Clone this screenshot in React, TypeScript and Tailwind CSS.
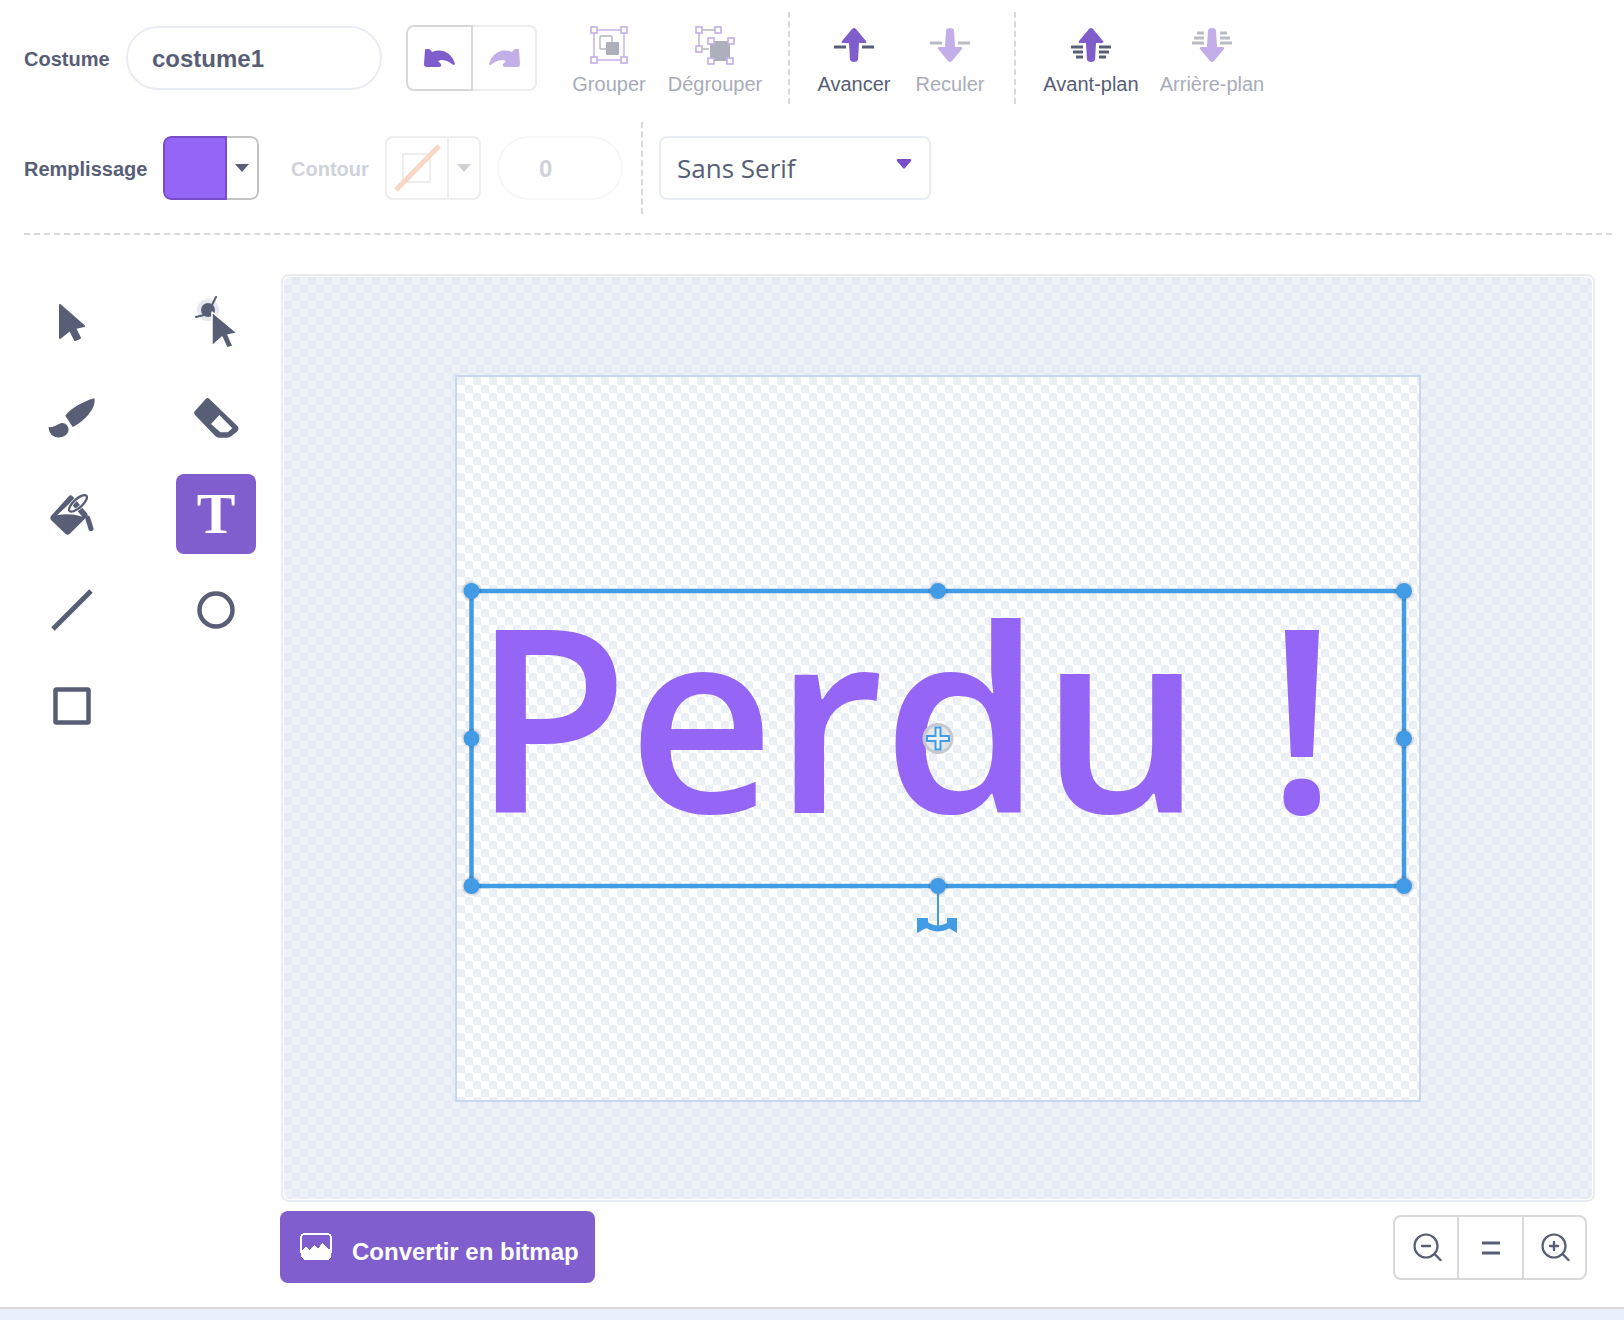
const ink = "#575e75";
const purple = "#7f5ecb";
const lilac = "#c3aee8";
const greyLine = "#b9bbc5";

function SelectIcon() {
  return (
    <svg width="28" height="39" viewBox="0 0 28 39">
      <path
        d="M2 2 L26 23 L17 25 L22 35 L17 37 L12 27 L2 35 Z"
        fill={ink}
        stroke={ink}
        strokeWidth="2"
        strokeLinejoin="round"
      />
    </svg>
  );
}

function ReshapeIcon() {
  return (
    <svg width="43" height="53" viewBox="0 0 43 53">
      <circle cx="13" cy="14" r="11" fill="#e6e8ef" />
      <circle cx="13" cy="14" r="7" fill={ink} />
      <path d="M1 21 L9 19 M17 9 L21 1" stroke={ink} strokeWidth="2" strokeLinecap="round" />
      <path
        d="M17 16 L42 37 L33 39 L38 50 L32 52 L27 41 L17 50 Z"
        fill={ink}
        stroke="#ffffff"
        strokeWidth="1.5"
        strokeLinejoin="round"
      />
    </svg>
  );
}

function BrushIcon() {
  return (
    <svg width="48" height="42" viewBox="86 382 144 126">
      <path d="M225 386 C190 395 150 420 138 438 L160 472 C195 455 232 415 225 386 Z" fill={ink} />
      <path
        d="M88 472 C105 475 115 462 128 460 C142 460 152 475 146 488 C138 504 118 505 108 502 C95 498 88 485 88 472 Z"
        fill={ink}
      />
    </svg>
  );
}

function EraserIcon() {
  return (
    <svg width="46" height="42" viewBox="518 384 138 126">
      <path
        d="M565 388 L652 472 Q658 480 650 488 L632 502 Q628 506 620 506 L596 506 Q590 506 584 500 L524 438 Q518 430 526 424 L556 390 Q560 386 565 388 Z"
        fill={ink}
      />
      <path d="M597 438 L636 478 L622 490 L600 490 L572 465 Z" fill="#ffffff" />
    </svg>
  );
}

function BucketIcon() {
  return (
    <svg width="46" height="44" viewBox="86 660 138 132">
      <path
        d="M146 672 Q150 668 156 672 L200 724 Q204 730 198 736 L148 786 Q142 790 136 786 L92 744 Q88 738 92 732 Z"
        fill={ink}
      />
      <path d="M150 692 L186 734 Q150 722 110 730 Z" fill="#ffffff" />
      <ellipse
        cx="173"
        cy="694"
        rx="13"
        ry="34"
        transform="rotate(48 173 694)"
        fill="none"
        stroke="#ffffff"
        strokeWidth="11"
      />
      <ellipse
        cx="173"
        cy="694"
        rx="13"
        ry="34"
        transform="rotate(48 173 694)"
        fill="none"
        stroke={ink}
        strokeWidth="7"
      />
      <path d="M202 738 L212 770" stroke={ink} strokeWidth="15" strokeLinecap="round" />
    </svg>
  );
}

function LineIcon() {
  return (
    <svg width="42" height="42" viewBox="0 0 42 42">
      <path d="M2 40 L40 2" stroke={ink} strokeWidth="5" />
    </svg>
  );
}

function CircleIcon() {
  return (
    <svg width="38" height="38" viewBox="0 0 38 38">
      <circle cx="19" cy="19" r="16.5" fill="none" stroke={ink} strokeWidth="4.5" />
    </svg>
  );
}

function SquareIcon() {
  return (
    <svg width="38" height="38" viewBox="0 0 38 38">
      <rect x="2.5" y="2.5" width="33" height="33" rx="1" fill="none" stroke={ink} strokeWidth="4.5" />
    </svg>
  );
}

function UndoIcon({ flip, color }: { flip?: boolean; color: string }) {
  return (
    <svg width="31" height="18" viewBox="0 0 31 18" className={flip ? "-scale-x-100" : ""}>
      <path
        d="M1 1 Q0 0 3 0 L5 0 Q7 1 8 3 Q18 -1 26 6 Q30 10 31 15 Q30 17 28 15 Q23 11 17 11 L14 12 L17 15 Q18 18 15 18 L3 18 Q0 18 0 15 Z"
        fill={color}
      />
    </svg>
  );
}

function HandleBox({ x, y }: { x: number; y: number }) {
  return <rect x={x - 3} y={y - 3} width="6" height="6" fill="#ffffff" stroke={lilac} strokeWidth="1.6" />;
}

function GroupIcon() {
  return (
    <svg width="40" height="40" viewBox="0 0 40 40">
      <rect x="5" y="5" width="30" height="30" fill="none" stroke={lilac} strokeWidth="1.4" />
      <rect x="11" y="11" width="12" height="13" rx="1" fill="none" stroke="#b4b6c1" strokeWidth="1.4" />
      <rect x="17" y="17" width="13" height="13" rx="1" fill="#adb0bb" />
      <HandleBox x={5} y={5} />
      <HandleBox x={35} y={5} />
      <HandleBox x={5} y={35} />
      <HandleBox x={35} y={35} />
    </svg>
  );
}

function UngroupIcon() {
  return (
    <svg width="42" height="40" viewBox="0 0 42 40">
      <path d="M5 5 L24 5 M5 5 L5 24 M5 24 L15 24" stroke="#b4b6c1" strokeWidth="1.4" />
      <rect x="16" y="16" width="20" height="20" fill="#adb0bb" />
      <HandleBox x={5} y={5} />
      <HandleBox x={24} y={5} />
      <HandleBox x={5} y={24} />
      <HandleBox x={17} y={16} />
      <HandleBox x={37} y={16} />
      <HandleBox x={17} y={36} />
      <HandleBox x={36} y={36} />
    </svg>
  );
}

function ArrowUpIcon({ layers, active }: { layers: number; active: boolean }) {
  const line = active ? ink : greyLine;
  return (
    <svg width="40" height="34" viewBox="0 0 40 34">
      <path
        d="M20 0 Q21 0 22 1 L32 13 Q33 15 31 15 L25 15 L24 32 Q23 34 20 34 Q17 34 16 32 L15 15 L9 15 Q7 15 8 13 L18 1 Q19 0 20 0 Z"
        fill={purple}
      />
      <path d="M0 19 L12 19 M28 19 L40 19" stroke={line} strokeWidth="3" />
      {layers > 1 && <path d="M2 24 L12 24 M28 24 L38 24" stroke={line} strokeWidth="3" />}
      {layers > 1 && <path d="M5 29 L12 29 M28 29 L35 29" stroke={line} strokeWidth="3" />}
    </svg>
  );
}

function ArrowDownIcon({ layers }: { layers: number }) {
  return (
    <svg width="40" height="34" viewBox="0 0 40 34">
      <path
        d="M20 34 Q21 34 22 33 L32 21 Q33 19 31 19 L25 19 L24 2 Q23 0 20 0 Q17 0 16 2 L15 19 L9 19 Q7 19 8 21 L18 33 Q19 34 20 34 Z"
        fill={lilac}
      />
      <path d="M0 15 L12 15 M28 15 L40 15" stroke={greyLine} strokeWidth="3" />
      {layers > 1 && <path d="M2 10 L12 10 M28 10 L38 10" stroke={greyLine} strokeWidth="3" />}
      {layers > 1 && <path d="M5 5 L12 5 M28 5 L35 5" stroke={greyLine} strokeWidth="3" />}
    </svg>
  );
}

function Caret({ color }: { color: string }) {
  return (
    <svg width="14" height="8" viewBox="0 0 14 8">
      <path d="M0 0 L14 0 L7 8 Z" fill={color} />
    </svg>
  );
}

function ZoomIcon({ kind }: { kind: "minus" | "plus" }) {
  return (
    <svg width="29" height="29" viewBox="0 0 29 29">
      <circle cx="13" cy="13" r="11.5" fill="none" stroke={ink} strokeWidth="2.2" />
      <path d="M22 21.5 L27.5 27" stroke={ink} strokeWidth="2.4" strokeLinecap="round" />
      <path d="M9 13 L17 13" stroke={ink} strokeWidth="2.4" strokeLinecap="round" />
      {kind === "plus" && <path d="M13 9 L13 17" stroke={ink} strokeWidth="2.4" strokeLinecap="round" />}
    </svg>
  );
}

function BitmapIcon() {
  return (
    <svg width="32" height="28" viewBox="0 0 32 28" shapeRendering="crispEdges">
      <path d="M1 20 L1 5 Q1 1 5 1 L27 1 Q31 1 31 5 L31 20" fill="none" stroke="#ffffff" strokeWidth="1.6" />
      <path d="M1 18 L6 14 L9 17 L14 12 L18 16 L22 10 L27 15 L31 17 L31 24 L28 27 L4 27 L1 24 Z" fill="#ffffff" />
    </svg>
  );
}

type ToolLabelProps = {
  label: string;
  width: string;
  dim?: boolean;
  children: React.ReactNode;
};

function ToolLabel({ label, width, dim, children }: ToolLabelProps) {
  return (
    <div className={`flex flex-col items-center pt-[4px] ${width}`}>
      <div className="flex h-[40px] items-center">{children}</div>
      <span className={`mt-[7px] text-[20px] leading-[24px] ${dim ? "text-[#a9acba]" : "text-[#575e75]"}`}>
        {label}
      </span>
    </div>
  );
}

function Handle({ cx, cy }: { cx: number; cy: number }) {
  return (
    <g>
      <circle cx={cx} cy={cy} r="10" fill="#000000" fillOpacity="0.1" />
      <circle cx={cx} cy={cy} r="8" fill="#429be5" />
    </g>
  );
}

function SelectionOverlay() {
  const left = 14.5;
  const right = 947;
  const top = 214;
  const bottom = 509;
  const midX = 481;
  const midY = 361.5;
  return (
    <svg className="absolute left-0 top-0 h-full w-full" viewBox="0 0 962 723">
      <rect x={left} y={top} width={right - left} height={bottom - top} fill="none" stroke="#429be5" strokeWidth="4.5" />
      <path d={`M${midX} ${bottom} L${midX} 552`} stroke="#429be5" strokeWidth="2" />
      <path d="M467 546 Q481 557 495 546" fill="none" stroke="#429be5" strokeWidth="6" />
      <path d="M460 541 L471 541 L471 550 L460 556 Z M500 541 L490 541 L490 550 L500 556 Z" fill="#429be5" />
      {[left, midX, right].map((cx) => (
        <Handle key={`t${cx}`} cx={cx} cy={top} />
      ))}
      {[left, right].map((cx) => (
        <Handle key={`m${cx}`} cx={cx} cy={midY} />
      ))}
      {[left, midX, right].map((cx) => (
        <Handle key={`b${cx}`} cx={cx} cy={bottom} />
      ))}
      <circle cx={midX} cy={midY} r="14" fill="#d5d8de" fillOpacity="0.6" stroke="#c6c9cf" strokeWidth="3" />
      <path
        d={`M${midX - 2.5} ${midY - 11} h5 v8.5 h8.5 v5 h-8.5 v8.5 h-5 v-8.5 h-8.5 v-5 h8.5 Z`}
        fill="#eef3fb"
        stroke="#429be5"
        strokeWidth="2"
      />
    </svg>
  );
}

export default function App() {
  return (
    <div className="flex h-[1320px] w-[1624px] flex-col overflow-hidden bg-white font-['Liberation_Sans',Arial,sans-serif] text-[#575e75]">
      <div className="mt-[12px] flex h-[92px] items-center pl-[24px]">
        <span className="w-[102px] pt-[2px] text-[20px] font-bold">Costume</span>
        <div className="flex h-[64px] w-[256px] items-center rounded-[32px] border-2 border-[#e9edf3] pl-[24px] pt-[2px] text-[24px] font-bold">
          costume1
        </div>
        <div className="ml-[24px] flex h-[66px] w-[131px] rounded-lg">
          <div className="flex w-[67px] items-center justify-center rounded-l-lg border-2 border-[#d9d9d9]">
            <UndoIcon color={purple} />
          </div>
          <div className="flex flex-1 items-center justify-center rounded-r-lg border-2 border-l-0 border-[#ececec]">
            <UndoIcon flip color={lilac} />
          </div>
        </div>
        <div className="ml-[21px] flex items-center">
          <ToolLabel label="Grouper" width="w-[102px]" dim>
            <GroupIcon />
          </ToolLabel>
          <ToolLabel label="Dégrouper" width="w-[110px]" dim>
            <UngroupIcon />
          </ToolLabel>
        </div>
        <div className="ml-[18px] h-full border-l-2 border-dashed border-[#d9d9d9]" />
        <div className="ml-[18px] flex items-center">
          <ToolLabel label="Avancer" width="w-[92px]">
            <ArrowUpIcon layers={1} active />
          </ToolLabel>
          <ToolLabel label="Reculer" width="w-[100px]" dim>
            <ArrowDownIcon layers={1} />
          </ToolLabel>
        </div>
        <div className="ml-[14px] h-full border-l-2 border-dashed border-[#d9d9d9]" />
        <div className="ml-[20px] flex items-center">
          <ToolLabel label="Avant-plan" width="w-[110px]">
            <ArrowUpIcon layers={3} active />
          </ToolLabel>
          <ToolLabel label="Arrière-plan" width="w-[132px]" dim>
            <ArrowDownIcon layers={3} />
          </ToolLabel>
        </div>
      </div>

      <div className="mt-[18px] flex h-[92px] items-center pl-[24px]">
        <span className="w-[139px] pt-[2px] text-[20px] font-bold">Remplissage</span>
        <div className="flex h-[64px] w-[96px] overflow-hidden rounded-lg">
          <div className="w-[64px] rounded-l-lg border-2 border-[#774dcb] bg-[#9566f6]" />
          <div className="flex flex-1 items-center justify-center rounded-r-lg border-2 border-l-0 border-[#c4c4c4]">
            <Caret color={ink} />
          </div>
        </div>
        <span className="ml-[32px] w-[94px] pt-[2px] text-[20px] font-bold text-[#d0d2da]">Contour</span>
        <div className="flex h-[64px] w-[96px] rounded-lg border-2 border-[#efefef]">
          <div className="flex w-[62px] items-center justify-center border-r-2 border-[#efefef]">
            <svg width="48" height="48" viewBox="0 0 48 48">
              <rect x="10" y="10" width="27" height="28" fill="none" stroke="#eeeeee" strokeWidth="2" />
              <path d="M3 46 L46 2" stroke="#fad6c4" strokeWidth="5" />
            </svg>
          </div>
          <div className="flex flex-1 items-center justify-center">
            <Caret color="#cfd0d6" />
          </div>
        </div>
        <div className="ml-[16px] flex h-[64px] w-[126px] items-center rounded-[32px] border-2 border-[#f6f7f9] pl-[40px] pt-[2px] text-[24px] font-bold text-[#d0d2da]">
          0
        </div>
        <div className="ml-[18px] h-full border-l-2 border-dashed border-[#d9d9d9]" />
        <div className="ml-[16px] flex h-[64px] w-[272px] items-center justify-between rounded-lg border-2 border-[#e9edf3] pl-[16px] pr-[17px] font-['Open_Sans',sans-serif] text-[26px]">
          <span>Sans Serif</span>
          <svg width="16" height="12" viewBox="0 0 16 12" className="-mt-[8px]">
            <path
              d="M2 1 L14 1 Q16 1 15 3 L9 10 Q8 11 7 10 L1 3 Q0 1 2 1 Z"
              fill="#774dcb"
            />
          </svg>
        </div>
      </div>

      <div className="ml-[24px] mt-[19px] w-[1588px] border-t-2 border-dashed border-[#d9d9d9]" />

      <div className="mt-[39px] flex">
        <div className="w-[281px] pl-[32px] pt-[8px]">
          <div className="grid grid-cols-[80px_80px] gap-x-[64px] gap-y-[16px]">
            <div className="flex h-[80px] items-center justify-center"><SelectIcon /></div>
            <div className="flex h-[80px] items-center justify-center"><ReshapeIcon /></div>
            <div className="flex h-[80px] items-center justify-center"><BrushIcon /></div>
            <div className="flex h-[80px] items-center justify-center"><EraserIcon /></div>
            <div className="flex h-[80px] items-center justify-center"><BucketIcon /></div>
            <div className="flex h-[80px] items-center justify-center rounded-lg bg-[#805ecd] font-['Liberation_Serif',serif] text-[58px] font-bold leading-none text-white">
              T
            </div>
            <div className="flex h-[80px] items-center justify-center"><LineIcon /></div>
            <div className="flex h-[80px] items-center justify-center"><CircleIcon /></div>
            <div className="flex h-[80px] items-center justify-center"><SquareIcon /></div>
          </div>
        </div>

        <div className="w-[1314px]">
          <div className="h-[928px] rounded-lg border-2 border-[#e8ebf2] bg-white p-[1px]">
            <div className="flex h-full items-center justify-center rounded-md bg-[repeating-conic-gradient(#e5e9f4_0_25%,#edf1f8_0_50%)] bg-[length:16px_16px]">
              <div className="relative h-[727px] w-[966px] shrink-0 border-2 border-[#c9d8ef] bg-[repeating-conic-gradient(#ffffff_0_25%,#ebf0f7_0_50%)] bg-[length:16px_16px]">
                <span className="absolute left-[15px] top-[164px] whitespace-pre font-['Open_Sans',sans-serif] text-[255px] font-semibold leading-[346px] tracking-[-1px] text-[#9566f6]">
                  Perdu !
                </span>
                <SelectionOverlay />
              </div>
            </div>
          </div>
          <div className="mt-[9px] flex items-start justify-between pr-[8px]">
            <div className="-ml-[1px] flex h-[72px] w-[315px] items-center rounded-lg bg-[#805ecd] pl-[20px] text-[24px] font-bold text-white">
              <BitmapIcon />
              <span className="ml-[20px] pt-[10px]">Convertir en bitmap</span>
            </div>
            <div className="mt-[4px] flex h-[65px] w-[194px] rounded-lg border-2 border-[#d9d9d9]">
              <div className="flex w-[64px] items-center justify-center border-r-2 border-[#d9d9d9] pl-[2px]">
                <ZoomIcon kind="minus" />
              </div>
              <div className="flex w-[65px] items-center justify-center border-r-2 border-[#d9d9d9]">
                <svg width="18" height="14" viewBox="0 0 18 14">
                  <path d="M1 2 L17 2 M1 12 L17 12" stroke={ink} strokeWidth="3" strokeLinecap="round" />
                </svg>
              </div>
              <div className="flex flex-1 items-center justify-center pl-[2px]">
                <ZoomIcon kind="plus" />
              </div>
            </div>
          </div>
        </div>
      </div>

      <div className="mt-[24px] flex-1 border-t-2 border-[#d9d9d9] bg-[#e8f0fc]" />
    </div>
  );
}
